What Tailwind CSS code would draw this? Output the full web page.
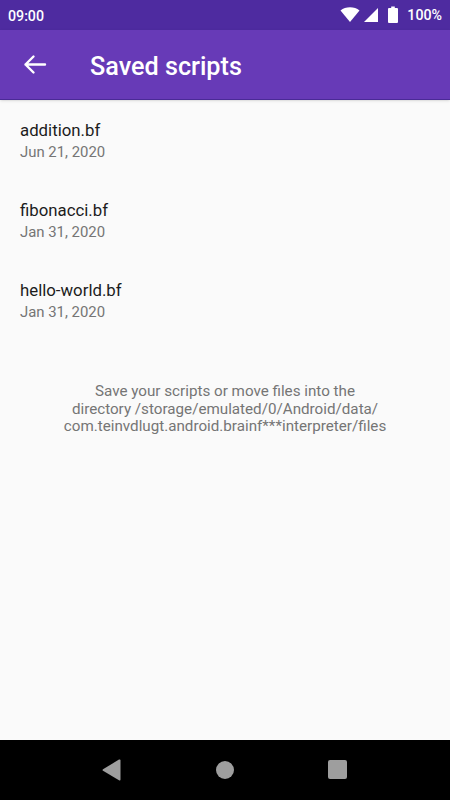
<!DOCTYPE html>
<html lang="en">
<head>
    <meta charset="UTF-8">
    <meta name="viewport" content="width=device-width, initial-scale=1.0">
    <title>Saved scripts</title>
    <script src="https://cdn.jsdelivr.net/npm/@tailwindcss/browser@4"></script>
</head>
<body class="bg-[#fafafa] font-['Roboto',sans-serif] overflow-hidden">
    <div class="w-[450px] h-[800px] flex flex-col">
        <!-- status bar -->
        <div class="h-[30px] bg-[#4e2ba0] flex items-center justify-between px-[8px] text-white text-[14.2px] font-medium">
            <span class="mt-[4px]">09:00</span>
            <div class="flex items-center">
                <svg width="20" height="16" viewBox="0 0 20 16" class="mr-[3px]"><path d="M0.5 3.5 C5.5 -0.8 14.5 -0.8 19.5 3.5 L10 15 Z" fill="#fff"/></svg>
                <svg width="16" height="16" viewBox="0 0 16 16" class="mr-[9px]"><path d="M15 1 V15 H1 Z" fill="#fff"/></svg>
                <svg width="10" height="17" viewBox="0 0 10 17" class="mr-[9px]"><path d="M3.2 0.5 H6.8 V2 H9 Q10 2 10 3 V16 Q10 17 9 17 H1 Q0 17 0 16 V3 Q0 2 1 2 H3.2 Z" fill="#fff"/></svg>
                <span class="mt-[2px]">100%</span>
            </div>
        </div>
        <!-- toolbar -->
        <div class="h-[70px] bg-[#673ab7] border-b border-[#4a2a96] shadow-sm flex items-center text-white">
            <svg width="24" height="24" viewBox="0 0 24 24" class="ml-[23px] mt-[1px]" fill="none" stroke="#fff" stroke-width="2.4" stroke-linecap="round" stroke-linejoin="round"><path d="M22 11.5 H2.5 M10.5 3.5 L2.5 11.5 L10.5 19.5"/></svg>
            <h1 class="ml-[43px] mt-[5px] text-[25.2px] font-medium">Saved scripts</h1>
        </div>
        <!-- file list -->
        <div class="flex-1 flex flex-col">
            <div class="pl-[20px] h-[80px] pt-[20px]">
                <p class="text-[16.8px] leading-[21px] text-[#1c1c1c]">addition.bf</p>
                <p class="text-[14.9px] leading-[23px] text-[#757575]">Jun 21, 2020</p>
            </div>
            <div class="pl-[20px] h-[80px] pt-[20px]">
                <p class="text-[16.8px] leading-[21px] text-[#1c1c1c]">fibonacci.bf</p>
                <p class="text-[14.9px] leading-[23px] text-[#757575]">Jan 31, 2020</p>
            </div>
            <div class="pl-[20px] h-[80px] pt-[20px]">
                <p class="text-[16.8px] leading-[21px] text-[#1c1c1c]">hello-world.bf</p>
                <p class="text-[14.9px] leading-[23px] text-[#757575]">Jan 31, 2020</p>
            </div>
            <p class="mt-[43px] text-center text-[15.2px] leading-[17.5px] text-[#757575]">Save your scripts or move files into the<br>directory /storage/emulated/0/Android/data/<br>com.teinvdlugt.android.brainf***interpreter/files</p>
        </div>
        <!-- nav bar -->
        <div class="h-[60px] bg-black relative flex items-center">
            <svg width="20" height="22" viewBox="0 0 20 22" class="absolute left-[102px] top-[19px]"><path d="M1 10.2 L17 0.6 Q18.5 0 18.5 1.5 V20.5 Q18.5 22 17 21.3 L1 11.8 Q0 11 1 10.2 Z" fill="#9e9e9e"/></svg>
            <div class="absolute left-[216px] top-[21px] w-[18px] h-[18px] rounded-full bg-[#9e9e9e]"></div>
            <div class="absolute left-[328px] top-[20px] w-[19px] h-[19px] rounded-[2px] bg-[#9e9e9e]"></div>
        </div>
    </div>
</body>
</html>
